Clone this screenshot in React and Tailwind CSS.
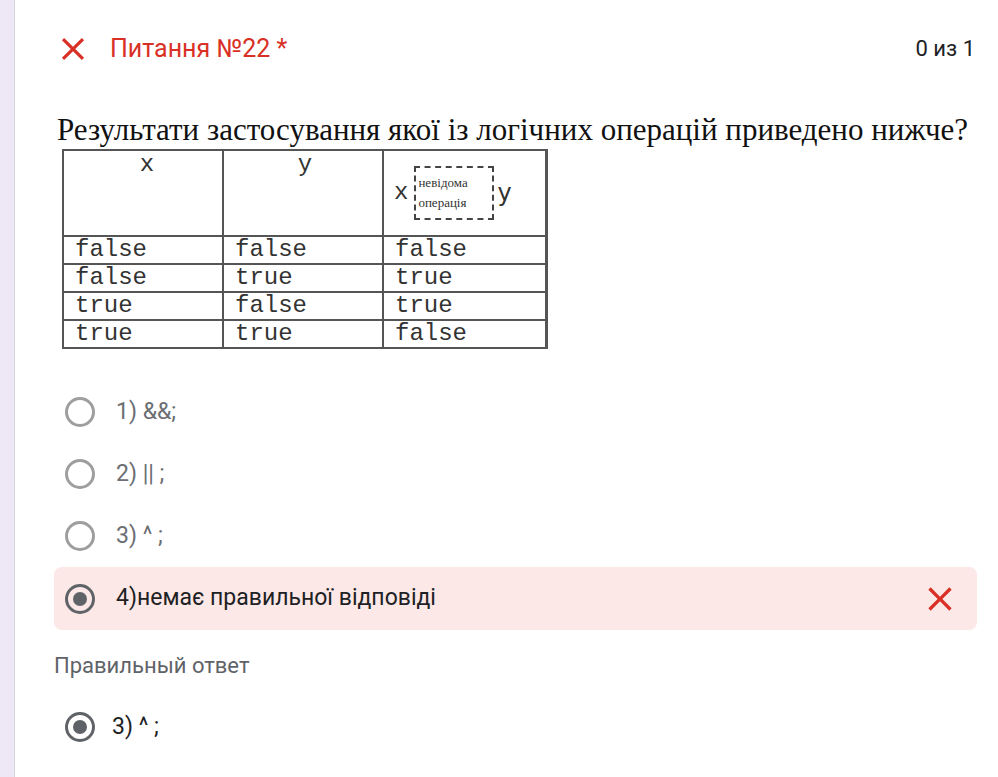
import React from 'react'

function CloseIcon({ size, className }) {
  return (
    <svg width={size} height={size} viewBox="0 0 24 24" className={className}>
      <path fill="currentColor" d="M19 6.41L17.59 5 12 10.59 6.41 5 5 6.41 10.59 12 5 17.59 6.41 19 12 13.41 17.59 19 19 17.59 13.41 12z" />
    </svg>
  )
}

function Radio({ checked }) {
  if (checked) {
    return (
      <div className="w-[30px] h-[30px] rounded-full border-[3px] border-[#5f6368] flex items-center justify-center shrink-0">
        <div className="w-[14px] h-[14px] rounded-full bg-[#5f6368]" />
      </div>
    )
  }
  return <div className="w-[30px] h-[30px] rounded-full border-[3px] border-[#9e9e9e] shrink-0" />
}

const rows = [
  ['false', 'false', 'false'],
  ['false', 'true', 'true'],
  ['true', 'false', 'true'],
  ['true', 'true', 'false'],
]

function TruthTable() {
  return (
    <table className="border-collapse border-2 border-[#555] ml-[8px] text-[#333]" style={{ fontFamily: '"Liberation Mono", monospace' }}>
      <tbody>
        <tr className="h-[86px]">
          <td className="w-[160px] border-2 border-[#555] align-top text-center text-[24px] leading-[28px] pl-[8px]">x</td>
          <td className="w-[160px] border-2 border-[#555] align-top text-center text-[24px] leading-[28px] pl-[4px]">y</td>
          <td className="w-[163px] border-2 border-[#555] border-r-[3px] align-middle">
            <div className="flex items-center pl-[10px] text-[24px] leading-[28px]">
              <span>x</span>
              <div className="ml-[6px] border-2 border-dashed border-[#444] pl-[2px] py-[5px] text-[13px] leading-[20px] text-[#333] w-[80px]" style={{ fontFamily: '"Liberation Serif", serif' }}>
                <div>невідома</div>
                <div>операція</div>
              </div>
              <span className="ml-[3px]" style={{ fontFamily: '"DejaVu Sans", sans-serif' }}>y</span>
            </div>
          </td>
        </tr>
        {rows.map((r, i) => (
          <tr key={i} className="h-[28px]">
            {r.map((c, j) => (
              <td key={j} className={'border-2 border-[#555] text-[24px] leading-[24px] pl-[11px]' + (j === 2 ? ' border-r-[3px]' : '')}>{c}</td>
            ))}
          </tr>
        ))}
      </tbody>
    </table>
  )
}

const options = ['1) &&;', '2) || ;', '3) ^ ;']

export default function App() {
  return (
    <div className="flex min-h-[777px] bg-white" style={{ fontFamily: 'Roboto, "Noto Sans", sans-serif' }}>
      <div className="w-[14px] bg-[#ede7f6] shrink-0" />
      <div className="flex-1 border-l border-[#d6d4de] pl-[39px] pr-[21px] bg-white">
        {/* header */}
        <div className="flex items-center h-[98px] pb-[1px]">
          <CloseIcon size={38} className="text-[#d93025]" />
          <div className="ml-[18px] text-[25px] text-[#d93025] leading-none">Питання №22 *</div>
          <div className="ml-auto mr-[2px] text-[22px] text-[#202124] leading-none">0 из 1</div>
        </div>

        {/* question image */}
        <div className="pt-[13px]">
          <div className="text-[31px] leading-[38px] text-[#111] ml-[3px] whitespace-nowrap" style={{ fontFamily: '"Liberation Serif", serif' }}>
            Результати застосування якої із логічних операцій приведено нижче?
          </div>
          <TruthTable />
        </div>

        {/* options */}
        <div className="mt-[32px] flex flex-col">
          {options.map((o) => (
            <div key={o} className="h-[62px] flex items-center pl-[11px]">
              <Radio checked={false} />
              <span className="ml-[21px] text-[23px] text-[#6b6e72]">{o}</span>
            </div>
          ))}
          <div className="h-[63px] flex items-center pl-[11px] pr-[17px] bg-[#fce8e6] rounded-[8px]">
            <Radio checked />
            <span className="ml-[21px] text-[23px] text-[#202124]">4)немає правильної відповіді</span>
            <CloseIcon size={40} className="ml-auto text-[#d93025]" />
          </div>
        </div>

        <div className="mt-[22px] text-[22px] text-[#5f6368] leading-[28px]">Правильный ответ</div>
        <div className="h-[62px] mt-[16px] flex items-center pl-[11px]">
          <Radio checked />
          <span className="ml-[17px] text-[23px] text-[#202124]">3) ^ ;</span>
        </div>
      </div>
    </div>
  )
}
